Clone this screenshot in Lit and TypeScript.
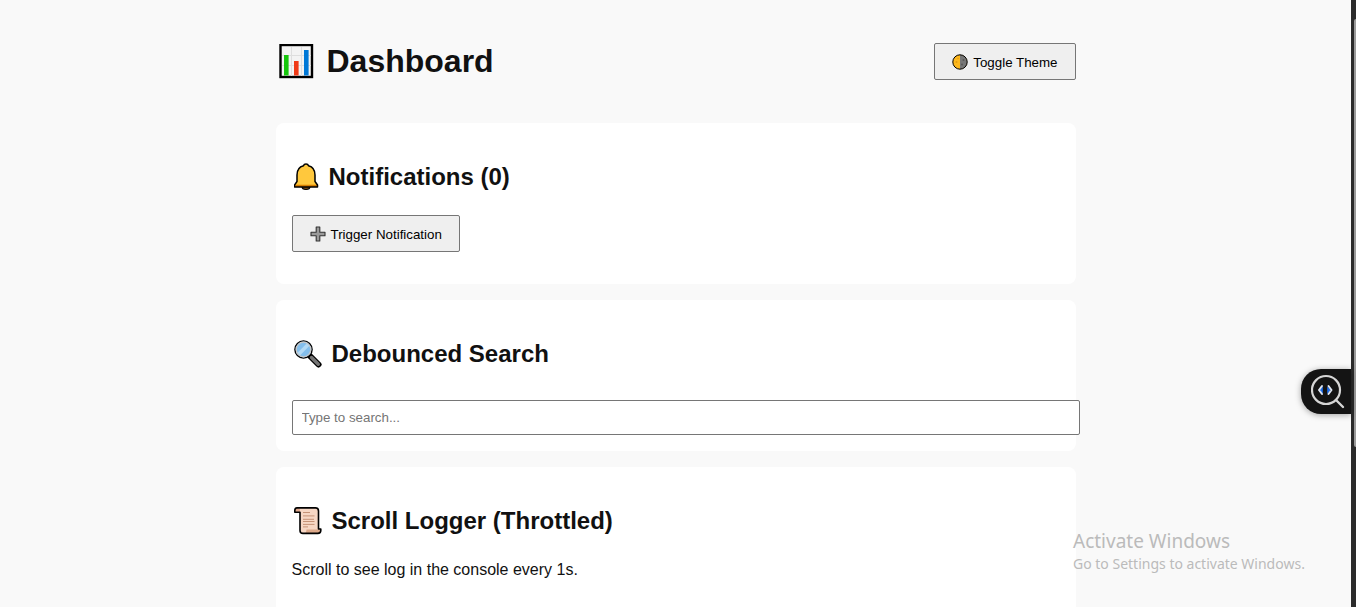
import { LitElement, html, css, svg } from "lit";
import { customElement, state } from "lit/decorators.js";

const chartIcon = svg`
  <rect x="1.500" y="1" width="31.500" height="32" fill="#f3f3f3" stroke="#000" stroke-width="2.400"/>
  <path d="M12.500 3v29M22.500 3v29M3 11.500h29M3 21.500h29" stroke="#dedede" stroke-width="1" fill="none"/>
  <rect x="5" y="11" width="4.600" height="20.500" fill="#16c60c"/>
  <rect x="15" y="17" width="4.600" height="14.500" fill="#f03a17"/>
  <rect x="25" y="6" width="4.600" height="25.500" fill="#0078d7"/>`;

const moonIcon = svg`
  <circle cx="8" cy="8" r="7.200" fill="#fdb81e"/>
  <path d="M8 .8a7.200 7.200 0 0 1 0 14.400z" fill="#767676"/>
  <circle cx="4.500" cy="8" r="1" fill="#e39c12"/><circle cx="6" cy="4.500" r=".8" fill="#e39c12"/>
  <circle cx="11.500" cy="6" r="1" fill="#565656"/><circle cx="10" cy="10.500" r="1" fill="#565656"/>
  <circle cx="8" cy="8" r="7.200" fill="none" stroke="#000" stroke-width="1"/>`;

const bellIcon = svg`
  <path d="M9 23.500h8c0 1.600-1.500 3-4 3s-4-1.400-4-3z" fill="#7a4a12" stroke="#000" stroke-width="1.200"/>
  <path d="M13 1c1.400 0 2.200.7 2.500 1.800C20 4 22 7.500 22 12v6.500l2.500 3.500V24H1.500v-2l2.500-3.500V12c0-4.500 2-8 6.500-9.200C10.800 1.700 11.600 1 13 1z" fill="#ffc83d"/>
  <path d="M2.500 21.800h21l1 .7V24h-23v-1.500z" fill="#d67d00"/>
  <path d="M13 1c1.400 0 2.200.7 2.500 1.800C20 4 22 7.500 22 12v6.500l2.500 3.500V24H1.500v-2l2.500-3.500V12c0-4.500 2-8 6.500-9.200C10.800 1.700 11.600 1 13 1z" fill="none" stroke="#000" stroke-width="1.500" stroke-linejoin="round"/>`;

const plusIcon = svg`
  <path d="M6.200 1h3.600v5.200H15v3.600H9.800V15H6.200V9.800H1V6.200h5.200z" fill="#9a9a9a" stroke="#333" stroke-width="1.100" stroke-linejoin="round"/>`;

const lensIcon = svg`
  <path d="M16.500 16.500l8 8" stroke="#000" stroke-width="6" stroke-linecap="round"/>
  <path d="M17.500 17.500l6.800 6.800" stroke="#767676" stroke-width="3.400" stroke-linecap="round"/>
  <circle cx="9.500" cy="9.500" r="8.600" fill="#83beec" stroke="#000" stroke-width="1.400"/>
  <path d="M3.500 12.700L12.700 3.500l3 2L5.700 15.700z" fill="#b3daf5"/>
  <circle cx="9.500" cy="9.500" r="7.300" fill="none" stroke="#c8c8c8" stroke-width="1.300"/>`;

const scrollIcon = svg`
  <path d="M3 .9h18.500c2 0 3 1.300 3 3V22h2.300v1.500c0 1.700-1.200 2.900-3 2.900H9c-2 0-3-1.300-3-3V5.300H.8V3.600C.8 2 1.700.9 3 .9z" fill="#f7d7c4"/>
  <path d="M3 .9c1.800 0 3 1 3 2.600v1.800H.8V3.600C.8 2 1.700.9 3 .9z" fill="#e0a88c"/>
  <path d="M12.500 22.500h14.300v1c0 1.700-1.200 2.900-3 2.900H10c1.700 0 2.500-1.500 2.500-3.900z" fill="#dda98a"/>
  <path d="M9 5.500h7M9 8.900h11.500M9 12.300h11M9 14.500h11.500M9 17.400h11.500M9 19.900h5" stroke="#c69377" stroke-width="1"/>
  <path d="M3 .9h18.500c2 0 3 1.300 3 3V22h2.300v1.500c0 1.700-1.200 2.900-3 2.900H9c-2 0-3-1.300-3-3V5.300H.8V3.600C.8 2 1.700.9 3 .9z" fill="none" stroke="#000" stroke-width="1.600" stroke-linejoin="round"/>`;

const inspectIcon = svg`
  <circle cx="15" cy="16" r="14" fill="none" stroke="#d6d6d6" stroke-width="2.200"/>
  <path d="M25 26l7 7" stroke="#d6d6d6" stroke-width="2.400" stroke-linecap="round"/>
  <path d="M11.800 12.500v7.500L8.500 16zM16.200 12.500v7.500l3.300-4z" fill="#1a6df0"/>
  <path d="M11 12l-3 4 3 4M17.500 12l3 4-3 4" fill="none" stroke="#dfe6f2" stroke-width="2" stroke-linecap="round" stroke-linejoin="round"/>`;

@customElement("app-root")
export class AppRoot extends LitElement {
  @state() private count = 0;

  static styles = css`
    :host {
      display: flex;
      position: relative;
      height: 100vh;
      overflow: hidden;
      background: #f9f9f9;
      color: #111;
      font-family: "Liberation Sans", Arial, sans-serif;
      font-size: 16px;
    }
    svg { display: block; flex: none; }
    .page { flex: 1; min-width: 0; padding-top: 40px; }
    .container { max-width: 800px; margin: 0 auto; }
    .header {
      display: flex;
      align-items: center;
      justify-content: space-between;
      margin-bottom: 40px;
    }
    h1, h2 { display: flex; align-items: center; margin: 0; }
    h1 { font-size: 32px; line-height: 43px; gap: 13px; padding-left: 3px; }
    h2 { font-size: 24px; line-height: 36px; gap: 10px; margin: 20px 0; padding-left: 2px; }
    .card {
      display: flow-root;
      background: #fff;
      border-radius: 8px;
      padding: 16px;
      margin-bottom: 16px;
    }
    .card p { margin: 20px 0; line-height: 22px; }
    .log { min-height: 160px; }
    .btn {
      display: inline-flex;
      align-items: center;
      gap: 5px;
      height: 37px;
      padding: 1px 17px 0;
      border: 1px solid #767676;
      border-radius: 2px;
      background: #efefef;
      color: #000;
      font-family: inherit;
      cursor: pointer;
    }
    .trigger { display: flex; margin-bottom: 16px; }
    .search {
      display: block;
      width: 100%;
      margin-top: 28px;
      padding: 9px;
      border: 1px solid #767676;
      border-radius: 2px;
      background: #fff;
      font-family: inherit;
    }
    .search::placeholder { color: #757575; }
    .rail { flex: none; width: 5px; background: #2b2b2b; padding: 19px 0 0 3px; box-sizing: border-box; }
    .thumb { height: 428px; border-radius: 2px 0 0 2px; background: #9b9b9b; }
    .inspect {
      position: absolute;
      top: 369px;
      right: 5px;
      width: 50px;
      height: 45px;
      padding: 0 0 0 10px;
      border: 0;
      border-radius: 20px 0 0 20px;
      background: #141414;
      box-shadow: 0 1px 6px rgba(0, 0, 0, 0.35);
    }
    .watermark {
      position: absolute;
      right: 47px;
      bottom: 33px;
      width: 236px;
      color: #bbb;
      font-family: "Noto Sans", "Open Sans", sans-serif;
      white-space: nowrap;
      pointer-events: none;
    }
    .mark-title { font-size: 19px; line-height: 25px; }
    .mark-text { font-size: 14px; line-height: 20px; }
  `;

  render() {
    return html`
      <main class="page">
        <div class="container">
          <header class="header">
            <h1><svg width="35" height="35" viewBox="0 0 35 35" aria-hidden="true">${chartIcon}</svg>Dashboard</h1>
            <button class="btn" type="button"><svg width="16" height="16" viewBox="0 0 16 16" aria-hidden="true">${moonIcon}</svg>Toggle Theme</button>
          </header>
          <section class="card">
            <h2><svg width="25" height="28" viewBox="1 0 25 28" aria-hidden="true">${bellIcon}</svg>Notifications (${this.count})</h2>
            <button class="btn trigger" type="button" @click=${() => this.count++}><svg width="16" height="16" viewBox="0 0 16 16" aria-hidden="true">${plusIcon}</svg>Trigger Notification</button>
          </section>
          <section class="card">
            <h2><svg width="28" height="28" viewBox="0 0 28 28" aria-hidden="true">${lensIcon}</svg>Debounced Search</h2>
            <input class="search" type="text" placeholder="Type to search..." aria-label="Debounced Search">
          </section>
          <section class="card log">
            <h2><svg width="28" height="28" viewBox="0 0 28 28" aria-hidden="true">${scrollIcon}</svg>Scroll Logger (Throttled)</h2>
            <p>Scroll to see log in the console every 1s.</p>
          </section>
        </div>
      </main>
      <div class="rail"><div class="thumb"></div></div>
      <button class="inspect" type="button" aria-label="Inspect"><svg width="35" height="35" viewBox="0 0 35 35" aria-hidden="true">${inspectIcon}</svg></button>
      <div class="watermark">
        <div class="mark-title">Activate Windows</div>
        <div class="mark-text">Go to Settings to activate Windows.</div>
      </div>
    `;
  }
}
